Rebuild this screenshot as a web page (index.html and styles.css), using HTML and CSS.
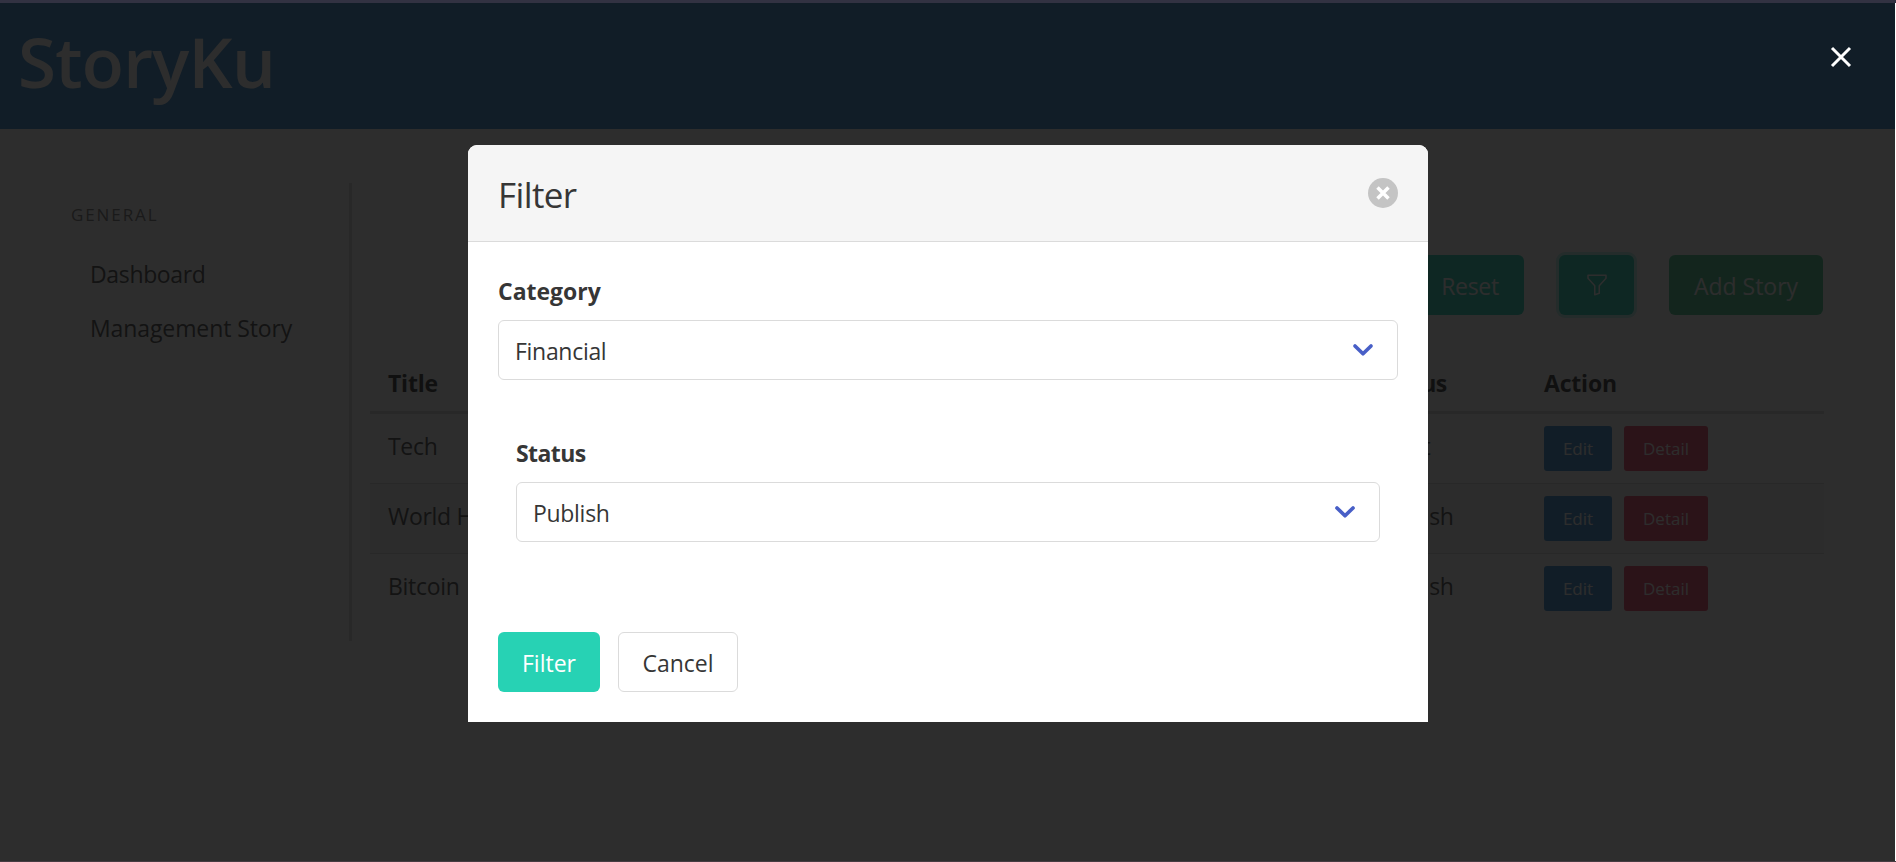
FILE: index.html
```html
<!DOCTYPE html>
<html lang="en">
<head>
<meta charset="utf-8">
<title>StoryKu</title>
<link rel="stylesheet" href="styles.css">
</head>
<body>
<div class="strip"></div>
<div class="app">
  <header class="hero"><h1 class="logo">StoryKu</h1></header>
  <div class="layout">
    <aside class="menu">
      <p class="menu-label">GENERAL</p>
      <a class="menu-item dashboard">Dashboard</a>
      <a class="menu-item">Management Story</a>
    </aside>
    <main class="content">
      <div class="toolbar">
        <button class="button primary reset">Reset</button>
        <button class="button primary focused filter-icon"><svg width="24" height="24" viewBox="0 0 16 16" fill="currentColor"><path d="M1.5 1.5A.5.5 0 0 1 2 1h12a.5.5 0 0 1 .5.5v2a.5.5 0 0 1-.128.334L10 8.692V13.5a.5.5 0 0 1-.342.474l-3 1A.5.5 0 0 1 6 14.5V8.692L1.628 3.834A.5.5 0 0 1 1.5 3.500v-2zm1 .5v1.308l4.372 4.858A.5.5 0 0 1 7 8.500v5.306l2-.666V8.500a.5.5 0 0 1 .128-.334L13.500 3.308V2h-11z"/></svg></button>
        <button class="button success add">Add Story</button>
      </div>
      <table class="table">
        <thead><tr><th class="c1">Title</th><th class="c2">Status</th><th>Action</th></tr></thead>
        <tbody>
          <tr><td>Tech</td><td>Draft</td><td class="action-cell"><div class="actions"><button class="small info">Edit</button><button class="small danger">Detail</button></div></td></tr>
          <tr class="striped"><td>World History</td><td>Publish</td><td class="action-cell"><div class="actions"><button class="small info">Edit</button><button class="small danger">Detail</button></div></td></tr>
          <tr><td>Bitcoin</td><td>Publish</td><td class="action-cell"><div class="actions"><button class="small info">Edit</button><button class="small danger">Detail</button></div></td></tr>
        </tbody>
      </table>
    </main>
  </div>
</div>
<div class="modal">
  <div class="card">
    <header class="card-head">
      <p class="card-title">Filter</p>
      <button class="delete"><svg width="30" height="30" viewBox="0 0 30 30"><path d="M9.500 9.500l11 11M20.500 9.500l-11 11" stroke="#fff" stroke-width="3.500" fill="none"/></svg></button>
    </header>
    <section class="card-body">
      <div class="field">
        <label class="label">Category</label>
        <div class="select"><span>Financial</span><svg class="chevron" width="22" height="16" viewBox="0 0 22 16"><path d="M3 4l8 7.800L19 4" fill="none" stroke="#485fc7" stroke-width="3.700" stroke-linecap="round" stroke-linejoin="round"/></svg></div>
      </div>
      <div class="field inset">
        <label class="label status">Status</label>
        <div class="select"><span>Publish</span><svg class="chevron" width="22" height="16" viewBox="0 0 22 16"><path d="M3 4l8 7.800L19 4" fill="none" stroke="#485fc7" stroke-width="3.700" stroke-linecap="round" stroke-linejoin="round"/></svg></div>
      </div>
      <div class="buttons">
        <button class="button primary submit">Filter</button>
        <button class="button cancel">Cancel</button>
      </div>
    </section>
  </div>
  <button class="modal-close"><svg width="24" height="24" viewBox="0 0 24 24"><path d="M3 3l18 18M21 3L3 21" stroke="#fff" stroke-width="3" fill="none"/></svg></button>
</div>
<div class="baseline"></div>
</body>
</html>
```
FILE: styles.css
```css
* { box-sizing: border-box; }
html, body { margin: 0; height: 862px; overflow: hidden; }
body {
  font-family: "Open Sans", "Noto Sans", sans-serif;
  font-size: 23px;
  line-height: 36px;
  color: #4a4a4a;
  background: #fff;
}
p, h1 { margin: 0; }
button { font: inherit; border: 0; padding: 0; margin: 0; }
.strip { height: 3px; background: #323242; }
.app { width: 1895px; height: 858px; background: #fff; }
.baseline { height: 1px; background: #463c42; }
.hero { height: 126px; padding: 10px 18px; background: #3e8ed0; }
.logo { font-size: 69px; line-height: 96px; font-weight: 600; color: #fff; letter-spacing: -0.7px; }
.layout { display: flex; padding: 54px 0 0 72px; }
.menu { width: 280px; height: 458px; border-right: 3px solid #dbdbdb; padding-top: 18px; }
.menu-label { font-size: 17px; line-height: 27px; letter-spacing: 1.9px; color: #7a7a7a; margin-bottom: 19px; margin-left: -1px; }
.menu-item { display: block; padding: 9px 18px; color: #4a4a4a; letter-spacing: -0.1px; }
.dashboard { letter-spacing: -0.35px; }
.content { width: 1454px; margin-left: 18px; padding-top: 72px; }
.toolbar { display: flex; justify-content: flex-end; gap: 35px; height: 60px; padding-right: 1px; }
.button { height: 60px; border-radius: 6px; color: #fff; text-align: center; line-height: 62px; }
.primary { background: #27d2b4; }
.success { background: #48c78e; }
.focused { box-shadow: 0 0 0 3px rgba(0, 209, 178, .25); }
.reset { width: 108px; letter-spacing: -0.3px; }
.filter-icon { width: 75px; line-height: 0; }
.add { width: 154px; }
.table { width: 1454px; margin-top: 36px; border-collapse: separate; border-spacing: 0; table-layout: fixed; }
.table th { height: 63px; padding: 3px 18px 0; text-align: left; color: #363636; border-bottom: 3px solid #dbdbdb; letter-spacing: -0.2px; }
.table td { height: 70px; padding: 14px 18px 0; vertical-align: top; border-bottom: 1px solid #dbdbdb; letter-spacing: -0.3px; }
.table .action-cell { padding-top: 12px; letter-spacing: 0; }
.table tr:last-child td { border-bottom: 0; }
.striped { background: #f4f4f4; }
.c1 { width: 989px; }
.c2 { width: 167px; }
.table .c2 { letter-spacing: -0.6px; }
.actions { display: flex; gap: 12px; }
.small { height: 45px; border-radius: 3px; color: #fff; font-size: 17px; line-height: 45px; }
.info { width: 68px; background: #3e8ed0; }
.danger { width: 84px; background: #f14668; }
.modal { position: absolute; left: 0; top: 3px; width: 1895px; height: 858px; background: rgba(10, 10, 10, .86); }
.card { width: 960px; height: 577px; margin: 142px 0 0 468px; background: #fff; border-radius: 9px 9px 0 0; overflow: hidden; color: #363636; }
.card-head { display: flex; justify-content: space-between; align-items: center; height: 97px; padding: 0 30px; background: #f5f5f5; border-bottom: 1px solid #dbdbdb; }
.card-title { font-size: 35px; line-height: 36px; padding-top: 3px; letter-spacing: -0.6px; }
.delete { width: 30px; height: 30px; border-radius: 50%; background: #c4c4c4; display: flex; }
.card-body { padding: 31px 30px 0; }
.label { display: block; font-weight: 700; margin-bottom: 11px; }
.status { letter-spacing: -0.6px; }
.select { display: flex; justify-content: space-between; align-items: center; height: 60px; padding: 2px 23px 0 16px; border: 1px solid #dbdbdb; border-radius: 6px; letter-spacing: -0.3px; }
.chevron { margin-top: -3px; }
.inset { margin: 55px 18px 0; }
.buttons { display: flex; gap: 18px; margin-top: 90px; }
.submit { width: 102px; }
.cancel { width: 120px; background: #fff; border: 1px solid #dbdbdb; color: #363636; line-height: 60px; }
.modal-close { position: absolute; left: 1829px; top: 42px; width: 24px; height: 24px; background: none; line-height: 0; }
```
